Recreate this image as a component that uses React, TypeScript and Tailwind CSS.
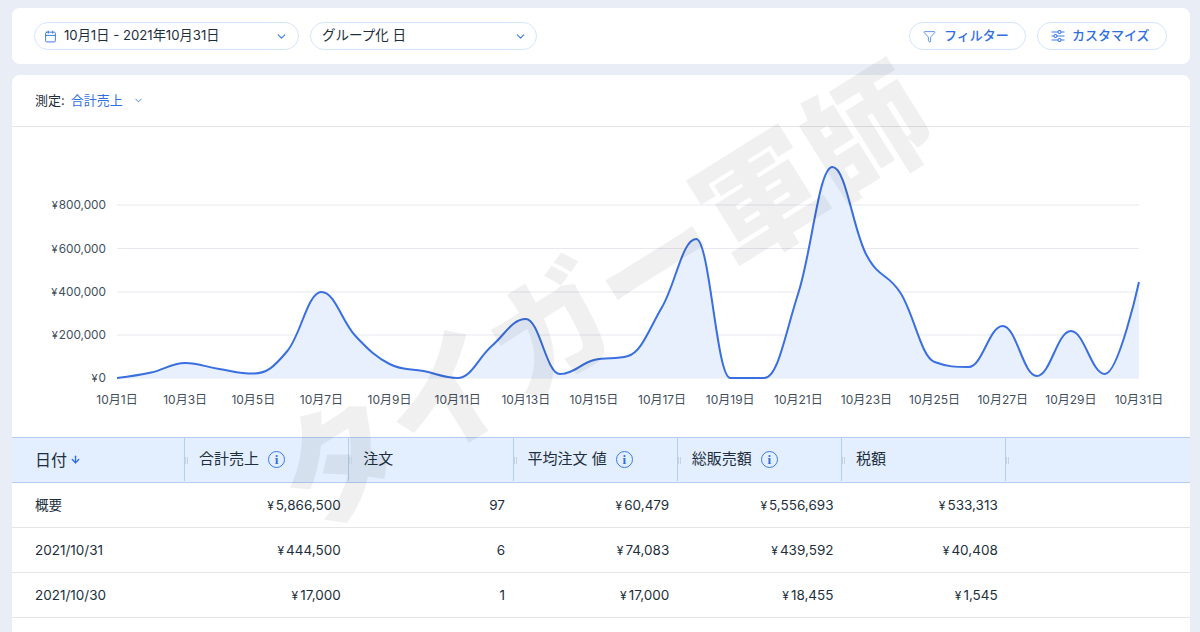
import { ArrowDown, Calendar, ChevronDown, Filter } from "lucide-react";

const FONT = "font-['Inter','Noto_Sans_CJK_JP',sans-serif]";

const ys = [
  378, 372.5, 363, 369, 373.5, 351, 292, 336, 364, 371, 378, 346, 319, 374, 360, 356, 307, 239, 378, 378, 293, 167, 255,
  293, 362, 367, 326, 376, 331, 374, 282,
];
const xAt = (i: number) => 117 + (i * 1022) / 30;

// same smoothing the chart library uses for its spline series
function splinePath() {
  const pts = ys.map((y, i) => ({ x: xAt(i), y }));
  const conn = pts.map((p, i) => {
    const prev = pts[i - 1];
    const next = pts[i + 1];
    if (!prev || !next) return { lx: p.x, ly: p.y, rx: p.x, ry: p.y };
    const lx = (1.5 * p.x + prev.x) / 2.5;
    let ly = (1.5 * p.y + prev.y) / 2.5;
    const rx = (1.5 * p.x + next.x) / 2.5;
    let ry = (1.5 * p.y + next.y) / 2.5;
    const c = ((ry - ly) * (rx - p.x)) / (rx - lx) + p.y - ry;
    ly += c;
    ry += c;
    if (ly > prev.y && ly > p.y) {
      ly = Math.max(prev.y, p.y);
      ry = 2 * p.y - ly;
    } else if (ly < prev.y && ly < p.y) {
      ly = Math.min(prev.y, p.y);
      ry = 2 * p.y - ly;
    }
    if (ry > next.y && ry > p.y) {
      ry = Math.max(next.y, p.y);
      ly = 2 * p.y - ry;
    } else if (ry < next.y && ry < p.y) {
      ry = Math.min(next.y, p.y);
      ly = 2 * p.y - ry;
    }
    return { lx, ly, rx, ry };
  });
  let d = `M ${pts[0].x} ${pts[0].y}`;
  for (let i = 1; i < pts.length; i++) {
    d += ` C ${conn[i - 1].rx} ${conn[i - 1].ry} ${conn[i].lx} ${conn[i].ly} ${pts[i].x} ${pts[i].y}`;
  }
  return d;
}

const line = splinePath();
const area = `${line} L 1139 378 L 117 378 Z`;

const yTicks = [
  { y: 205, label: "800,000" },
  { y: 248.5, label: "600,000" },
  { y: 292, label: "400,000" },
  { y: 335, label: "200,000" },
  { y: 378, label: "0" },
];

function Chart() {
  return (
    <svg viewBox="12 127 1178 310" className="block w-full h-[310px]">
      {yTicks.map((t) => (
        <g key={t.y}>
          <line x1="117" x2="1139" y1={t.y} y2={t.y} stroke="#e7e9ee" strokeWidth="1" />
          <text x="106" y={t.y + 4} textAnchor="end" className="text-[11.8px] fill-[#3f4f5c]">
            <tspan className="text-[11px]">¥</tspan>
            <tspan dx="1">{t.label}</tspan>
          </text>
        </g>
      ))}
      <path d={area} fill="#e8f0fe" />
      <path d={line} fill="none" stroke="#3a6fe0" strokeWidth="2" />
      {ys.map((_, i) =>
        i % 2 === 0 ? (
          <text key={i} x={xAt(i)} y="404" textAnchor="middle" className="text-[12px] fill-[#3f4f5c]">
            {`10月${i + 1}日`}
          </text>
        ) : null,
      )}
    </svg>
  );
}

function Yen({ value }: { value: string }) {
  return (
    <span>
      <span className="text-[12px] mr-[2px]">¥</span>
      {value}
    </span>
  );
}

function Info() {
  return (
    <span className="ml-[9px] inline-flex w-[17px] h-[17px] items-center justify-center rounded-full border-[1.5px] border-[#3b7be8] text-[13px] font-bold leading-none text-[#2f6fdf] font-['Liberation_Serif',serif]">
      i
    </span>
  );
}

function Handle() {
  return (
    <span className="absolute right-[-4px] top-[19px] z-10 flex gap-[1px]">
      <span className="w-[1px] h-[7px] bg-[#c9d3e0]" />
      <span className="w-[1px] h-[7px] bg-[#c9d3e0]" />
    </span>
  );
}

function TuneIcon() {
  return (
    <svg viewBox="0 0 14 12" className="w-[14px] h-[12px] text-[#3b7be8]" fill="none" stroke="currentColor" strokeWidth="1.1">
      <path d="M0.5 2H7M10 2H13.5M0.5 6H3M6 6H13.5M0.5 10H7M10 10H13.5" />
      <circle cx="8.5" cy="2" r="1.5" />
      <circle cx="4.5" cy="6" r="1.5" />
      <circle cx="8.5" cy="10" r="1.5" />
    </svg>
  );
}

const columns = [
  { label: "合計売上", info: true },
  { label: "注文", info: false },
  { label: "平均注文 値", info: true },
  { label: "総販売額", info: true },
  { label: "税額", info: false },
];

const rows = [
  { date: "概要", vals: ["5,866,500", "97", "60,479", "5,556,693", "533,313"] },
  { date: "2021/10/31", vals: ["444,500", "6", "74,083", "439,592", "40,408"] },
  { date: "2021/10/30", vals: ["17,000", "1", "17,000", "18,455", "1,545"] },
];

function Table() {
  return (
    <div>
      <div className="flex h-[46px] pb-[1px] bg-[#e3eefe] border-y border-[#b4cff2] text-[15px] text-[#1d2f3d]">
        <div className="relative w-[173px] pl-[23px] flex items-center border-r border-[#b4cff2]">
          <span className="text-[16px]">日付</span>
          <ArrowDown className="ml-[3px] w-[11px] h-[11px] text-[#2f6fdf]" strokeWidth={3} />
          <Handle />
        </div>
        {columns.map((c) => (
          <div key={c.label} className="relative w-[164.25px] pl-[14px] flex items-center border-r border-[#b4cff2]">
            <span>{c.label}</span>
            {c.info && <Info />}
            <Handle />
          </div>
        ))}
      </div>
      {rows.map((r) => (
        <div key={r.date} className="flex h-[45px] items-center border-b border-[#e3e5e8] text-[13.5px] text-[#1d2f3d]">
          <div className="w-[173px] pl-[23px]">{r.date}</div>
          {r.vals.map((v, i) => (
            <div key={i} className="w-[164.25px] pr-[8.5px] text-right">
              {i === 1 ? v : <Yen value={v} />}
            </div>
          ))}
        </div>
      ))}
    </div>
  );
}

function Pill({ width, children }: { width: string; children: React.ReactNode }) {
  return (
    <div className={`h-[28px] flex items-center rounded-full border border-[#d6e5fb] bg-white ${width}`}>{children}</div>
  );
}

export default function App() {
  return (
    <div className={`relative h-[632px] overflow-hidden bg-[#e9edf5] pt-2 pl-3 pr-[10px] ${FONT}`}>
      <div className="h-[56px] flex items-center justify-between rounded-lg bg-white pl-[22px] pr-[23px]">
        <div className="flex gap-[11px]">
          <div className="h-[28px] w-[265px] pl-[9px] pr-[10px] flex items-center rounded-full border border-[#d6e5fb] text-[13.2px] text-[#1d2f3d]">
            <Calendar className="w-[13px] h-[13px] text-[#3b7be8]" strokeWidth={1.8} />
            <span className="ml-[7px] flex-1 pb-[1px]">10月1日 - 2021年10月31日</span>
            <ChevronDown className="w-[13px] h-[13px] text-[#3b7be8]" />
          </div>
          <div className="h-[28px] w-[227px] pl-[11px] pr-[9px] flex items-center rounded-full border border-[#d6e5fb] text-[13.5px] text-[#1d2f3d]">
            <span className="flex-1 pb-[1px]">グループ化 日</span>
            <ChevronDown className="w-[13px] h-[13px] text-[#3b7be8]" />
          </div>
        </div>
        <div className="flex gap-[11px]">
          <Pill width="w-[117px] pl-[13px]">
            <Filter className="w-[13px] h-[13px] text-[#3b7be8]" strokeWidth={1.5} />
            <span className="ml-[8px] text-[13px] font-medium text-[#2f6fdf]">フィルター</span>
          </Pill>
          <Pill width="w-[130px] pl-[13px]">
            <TuneIcon />
            <span className="ml-[7px] text-[13px] font-medium text-[#2f6fdf]">カスタマイズ</span>
          </Pill>
        </div>
      </div>

      <div className="mt-[11px] bg-white rounded-t-lg h-[557px]">
        <div className="h-[52px] flex items-center pl-[23px] border-b border-[#e3e5e8] text-[13px]">
          <span className="text-[#1d2f3d]">測定:</span>
          <span className="ml-[6px] text-[#2f6fdf]">合計売上</span>
          <ChevronDown className="ml-[10px] w-[11px] h-[11px] text-[#3b7be8]" />
        </div>
        <Chart />
        <Table />
      </div>

      <div className="absolute left-[604px] top-[298px] -translate-x-1/2 -translate-y-1/2 -rotate-[32deg] whitespace-nowrap pointer-events-none text-[124px] leading-none font-black text-black/[0.06]">
        タイガー軍師
      </div>
    </div>
  );
}
